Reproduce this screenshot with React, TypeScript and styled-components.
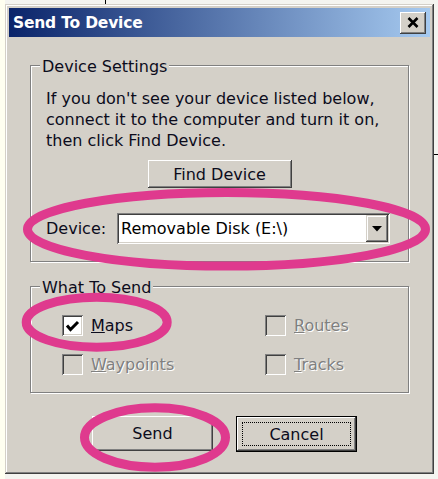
import styled, { createGlobalStyle } from "styled-components";

const GlobalStyle = createGlobalStyle`
  html, body {
    margin: 0;
    padding: 0;
  }
  body {
    width: 438px;
    height: 479px;
    overflow: hidden;
    font-family: "DejaVu Sans", Tahoma, Verdana, sans-serif;
  }
`;

const FACE = "#d4d0c8";

const Screen = styled.div`
  position: relative;
  width: 438px;
  height: 479px;
  box-sizing: border-box;
  padding: 4px 4px 0 5px;
  overflow: hidden;
  background: linear-gradient(to right, #fffff0 0 5px, #f4f4f0 5px);

  &::before {
    content: "";
    position: absolute;
    left: 105px;
    top: 0;
    width: 1px;
    height: 4px;
    background: #000;
  }
  &::after {
    content: "";
    position: absolute;
    right: 0;
    top: 154px;
    width: 4px;
    height: 1px;
    background: #000;
  }
`;

const Window = styled.div`
  width: 429px;
  height: 470px;
  box-sizing: border-box;
  padding: 4px;
  background: ${FACE};
  box-shadow: inset -1px -1px #404040, inset 1px 1px ${FACE},
    inset -2px -2px #808080, inset 2px 2px #fff;
  display: flex;
  flex-direction: column;
`;

const TitleBar = styled.div`
  height: 29px;
  display: flex;
  align-items: center;
  justify-content: space-between;
  padding: 0 4px 0 4px;
  background: linear-gradient(to right, #0a246a, #a6caf0);
`;

const Title = styled.span`
  color: #fff;
  font-weight: bold;
  font-size: 15.5px;
  letter-spacing: -0.2px;
`;

const CloseBox = styled.div`
  width: 26px;
  height: 22px;
  box-sizing: border-box;
  display: flex;
  align-items: center;
  justify-content: center;
  background: ${FACE};
  box-shadow: inset -1px -1px #404040, inset 1px 1px #fff,
    inset -2px -2px #808080;
`;

const Body = styled.div`
  flex: 1;
  display: flex;
  flex-direction: column;
  padding: 0 21px;
  font-size: 16px;
  color: #0c0c1c;
`;

const Group = styled.div<{ $top: number }>`
  margin-top: ${(p) => p.$top}px;
  border: 1px solid #808080;
  box-shadow: inset 1px 1px #fff, 1px 1px #fff;
  padding: 0 15px 17px 15px;
  display: flex;
  flex-direction: column;
`;

const Caption = styled.span`
  align-self: flex-start;
  margin: -9px 0 0 -6px;
  padding: 0 2px;
  line-height: 20px;
  background: ${FACE};
`;

const Hint = styled.p`
  margin: 11px 0 0 0;
  line-height: 21px;
`;

const Button = styled.button<{ $w: number; $h: number; $default?: boolean }>`
  width: ${(p) => p.$w}px;
  height: ${(p) => p.$h}px;
  padding: 0;
  border: ${(p) => (p.$default ? "1px solid #000" : "none")};
  background: ${FACE};
  font: inherit;
  color: inherit;
  box-shadow: inset -1px -1px #404040, inset 1px 1px #fff,
    inset -2px -2px #808080;
  display: flex;
  align-items: center;
  justify-content: center;
`;

const FocusRing = styled.span`
  border: 1px dotted #000;
  width: calc(100% - 10px);
  height: calc(100% - 10px);
  box-sizing: border-box;
  display: flex;
  align-items: center;
  justify-content: center;
`;

const FindButton = styled(Button)`
  align-self: center;
  margin-top: 9px;
`;

const DeviceRow = styled.div`
  margin-top: 25px;
  display: flex;
  align-items: center;
`;

const FieldLabel = styled.span`
  width: 71px;
`;

const Combo = styled.div`
  width: 273px;
  height: 31px;
  box-sizing: border-box;
  padding: 2px;
  background: #fff;
  box-shadow: inset 1px 1px #808080, inset -1px -1px #fff,
    inset 2px 2px #404040, inset -2px -2px ${FACE};
  display: flex;
  align-items: stretch;
`;

const ComboText = styled.span`
  flex: 1;
  padding-left: 2px;
  display: flex;
  align-items: center;
  color: #000;
`;

const DropButton = styled.span`
  width: 22px;
  background: ${FACE};
  box-shadow: inset -1px -1px #404040, inset 1px 1px ${FACE},
    inset -2px -2px #808080, inset 2px 2px #fff;
  display: flex;
  align-items: center;
  justify-content: center;
`;

const Options = styled.div`
  margin: 17px 0 0 16px;
  display: grid;
  grid-template-columns: 203px auto;
  row-gap: 18px;
`;

const Option = styled.label<{ $disabled?: boolean }>`
  display: flex;
  align-items: center;
  gap: 8px;
  height: 21px;
  color: ${(p) => (p.$disabled ? "#808080" : "inherit")};
  text-shadow: ${(p) => (p.$disabled ? "1px 1px 0 #fff" : "none")};
`;

const Box = styled.span<{ $disabled?: boolean }>`
  width: 21px;
  height: 21px;
  box-sizing: border-box;
  background: ${(p) => (p.$disabled ? FACE : "#fff")};
  box-shadow: inset 1px 1px #808080, inset -1px -1px #fff,
    inset 2px 2px #404040, inset -2px -2px ${FACE};
  display: flex;
  align-items: center;
  justify-content: center;
`;

const Actions = styled.div`
  margin-top: 23px;
  padding-left: 10px;
  display: flex;
  justify-content: center;
  gap: 23px;
`;

const Marks = styled.svg`
  position: absolute;
  left: 0;
  top: 0;
  pointer-events: none;
`;

const CloseIcon = () => (
  <svg width="12" height="11" viewBox="0 0 12 11">
    <path d="M1.5 1 L10.5 10 M10.5 1 L1.5 10" stroke="#000" strokeWidth="2.6" />
  </svg>
);

const Check = () => (
  <svg width="15" height="14" viewBox="0 0 15 14">
    <path d="M2 6.5 L5.5 10.5 L13 3" fill="none" stroke="#000" strokeWidth="3" />
  </svg>
);

const Arrow = () => (
  <svg width="10" height="6" viewBox="0 0 10 6">
    <path d="M0 0 H10 L5 5.5 Z" fill="#000" />
  </svg>
);

type Item = { key: string; rest: string; checked?: boolean; disabled?: boolean };

const items: Item[] = [
  { key: "M", rest: "aps", checked: true },
  { key: "R", rest: "outes", disabled: true },
  { key: "W", rest: "aypoints", disabled: true },
  { key: "T", rest: "racks", disabled: true },
];

export default function App() {
  return (
    <Screen>
      <GlobalStyle />
      <Window>
        <TitleBar>
          <Title>Send To Device</Title>
          <CloseBox>
            <CloseIcon />
          </CloseBox>
        </TitleBar>
        <Body>
          <Group $top={28}>
            <Caption>Device Settings</Caption>
            <Hint>
              If you don't see your device listed below,
              <br />
              connect it to the computer and turn it on,
              <br />
              then click Find Device.
            </Hint>
            <FindButton $w={144} $h={28}>
              Find Device
            </FindButton>
            <DeviceRow>
              <FieldLabel>Device:</FieldLabel>
              <Combo>
                <ComboText>Removable Disk (E:\)</ComboText>
                <DropButton>
                  <Arrow />
                </DropButton>
              </Combo>
            </DeviceRow>
          </Group>
          <Group $top={24}>
            <Caption>What To Send</Caption>
            <Options>
              {items.map((it) => (
                <Option key={it.key} $disabled={it.disabled}>
                  <Box $disabled={it.disabled}>{it.checked && <Check />}</Box>
                  <span>
                    <u>{it.key}</u>
                    {it.rest}
                  </span>
                </Option>
              ))}
            </Options>
          </Group>
          <Actions>
            <Button $w={121} $h={35}>
              Send
            </Button>
            <Button $w={121} $h={36} $default>
              <FocusRing>Cancel</FocusRing>
            </Button>
          </Actions>
        </Body>
      </Window>
      <Marks width="438" height="479" viewBox="0 0 438 479">
        <g fill="none" stroke="#df3a8e" strokeWidth="9">
          <ellipse cx="226.5" cy="229.3" rx="199" ry="36.8" />
          <ellipse cx="96.7" cy="322.2" rx="70.5" ry="25" />
          <ellipse cx="155" cy="437.5" rx="70.5" ry="29.7" />
        </g>
      </Marks>
    </Screen>
  );
}
